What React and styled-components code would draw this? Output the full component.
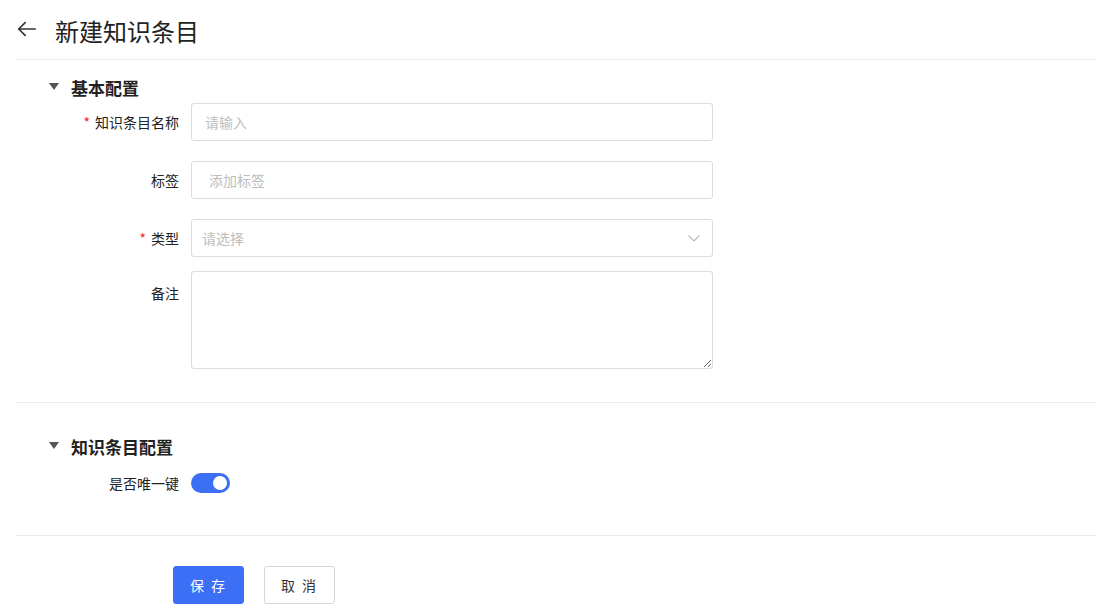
import React from "react";
import styled, { createGlobalStyle } from "styled-components";

const Global = createGlobalStyle`
  body {
    margin: 0;
    background: #fff;
    font-family: "Noto Sans CJK SC", "Noto Sans", sans-serif;
    color: #333;
  }
`;

function App() {
  return (
    <>
      <Global />
      <Page>
        <Header>
          <BackButton>
            <svg width="24" height="24" viewBox="0 0 24 24" fill="none" stroke="#333" strokeWidth="1.8" strokeLinecap="round" strokeLinejoin="round">
              <path d="M21 12H3" />
              <path d="M10 5l-7 7 7 7" />
            </svg>
          </BackButton>
          <Title>新建知识条目</Title>
        </Header>

        <Section>
          <SectionHead>
            <Caret />
            <SectionTitle>基本配置</SectionTitle>
          </SectionHead>
          <Row $mb={20}>
            <Label $required>知识条目名称</Label>
            <Field>
              <Input placeholder="请输入" $pl={13} />
            </Field>
          </Row>
          <Row $mb={20}>
            <Label>标签</Label>
            <Field>
              <Input placeholder="添加标签" $pl={17} />
            </Field>
          </Row>
          <Row $mb={14}>
            <Label $required>类型</Label>
            <Field>
              <Select>
                <Placeholder>请选择</Placeholder>
                <svg width="14" height="14" viewBox="0 0 14 14" fill="none" stroke="#b8b8b8" strokeWidth="1.1">
                  <path d="M1.5 4.5L7 10l5.5-5.5" />
                </svg>
              </Select>
            </Field>
          </Row>
          <Row $mb={0} $top>
            <Label $top>备注</Label>
            <Field>
              <TextArea />
            </Field>
          </Row>
        </Section>

        <Section $pt={32}>
          <SectionHead $mb={7}>
            <Caret />
            <SectionTitle>知识条目配置</SectionTitle>
          </SectionHead>
          <Row $mb={0}>
            <Label>是否唯一键</Label>
            <Field>
              <Switch $on>
                <Knob />
              </Switch>
            </Field>
          </Row>
        </Section>

        <Actions>
          <Button $primary>保 存</Button>
          <Button>取 消</Button>
        </Actions>
      </Page>
    </>
  );
}

export default App;

const Page = styled.div`
  padding-left: 16px;
`;

const Header = styled.div`
  display: flex;
  align-items: center;
  height: 59px;
  border-bottom: 1px solid #ebebeb;
`;

const BackButton = styled.div`
  width: 22px;
  height: 22px;
  display: flex;
  align-items: center;
  justify-content: center;
  margin-top: -2px;
  cursor: pointer;
`;

const Title = styled.h1`
  margin: 2px 0 0 17px;
  font-size: 24px;
  font-weight: 400;
  color: #222;
  line-height: 30px;
`;

const Section = styled.div`
  padding-top: ${(p) => p.$pt ?? 16}px;
  padding-bottom: 33px;
  border-bottom: 1px solid #ebebeb;
`;

const SectionHead = styled.div`
  display: flex;
  align-items: center;
  height: 22px;
  padding-left: 33px;
  margin-bottom: ${(p) => p.$mb ?? 5}px;
`;

const Caret = styled.span`
  width: 0;
  height: 0;
  border-left: 5.5px solid transparent;
  border-right: 5.5px solid transparent;
  border-top: 7px solid #555;
  margin-right: 12px;
  margin-top: -2px;
`;

const SectionTitle = styled.span`
  font-size: 17px;
  font-weight: 700;
  color: #222;
`;

const Row = styled.div`
  display: flex;
  align-items: ${(p) => (p.$top ? "flex-start" : "center")};
  margin-bottom: ${(p) => p.$mb}px;
  min-height: 38px;
`;

const Label = styled.label`
  width: 175px;
  flex-shrink: 0;
  text-align: right;
  font-size: 14px;
  color: #222;
  padding-right: 12px;
  box-sizing: border-box;
  padding-top: ${(p) => (p.$top ? "12px" : "0")};

  &::before {
    content: ${(p) => (p.$required ? '"*"' : "none")};
    color: #f0242f;
    margin-right: 5px;
  }
`;

const Field = styled.div`
  width: 522px;
`;

const Input = styled.input`
  width: 100%;
  height: 38px;
  box-sizing: border-box;
  border: 1px solid #dcdcdc;
  border-radius: 3px;
  padding: 0 0 0 ${(p) => p.$pl}px;
  font-family: inherit;
  font-size: 14px;
  outline: none;

  &::placeholder {
    color: #bdbdbd;
  }
`;

const Select = styled.div`
  height: 38px;
  box-sizing: border-box;
  border: 1px solid #dcdcdc;
  border-radius: 3px;
  display: flex;
  align-items: center;
  justify-content: space-between;
  padding: 0 11px 0 10px;
`;

const Placeholder = styled.span`
  font-size: 14px;
  color: #bdbdbd;
`;

const TextArea = styled.textarea`
  display: block;
  width: 100%;
  height: 98px;
  box-sizing: border-box;
  border: 1px solid #dcdcdc;
  border-radius: 3px;
  font-family: inherit;
  font-size: 14px;
  resize: vertical;
  outline: none;
`;

const Switch = styled.div`
  width: 39px;
  height: 20px;
  border-radius: 10px;
  background: ${(p) => (p.$on ? "#3a6ff6" : "#ccc")};
  display: flex;
  align-items: center;
  justify-content: ${(p) => (p.$on ? "flex-end" : "flex-start")};
  padding: 0 3px;
  box-sizing: border-box;
`;

const Knob = styled.span`
  width: 14px;
  height: 14px;
  border-radius: 50%;
  background: #fff;
`;

const Actions = styled.div`
  display: flex;
  gap: 20px;
  padding: 30px 0 0 157px;
`;

const Button = styled.button`
  width: 71px;
  height: 38px;
  border-radius: 3px;
  font-family: inherit;
  font-size: 14px;
  letter-spacing: 2px;
  cursor: pointer;
  border: 1px solid ${(p) => (p.$primary ? "#3a6ff6" : "#d6d6d6")};
  background: ${(p) => (p.$primary ? "#3a6ff6" : "#fff")};
  color: ${(p) => (p.$primary ? "#fff" : "#333")};
`;
